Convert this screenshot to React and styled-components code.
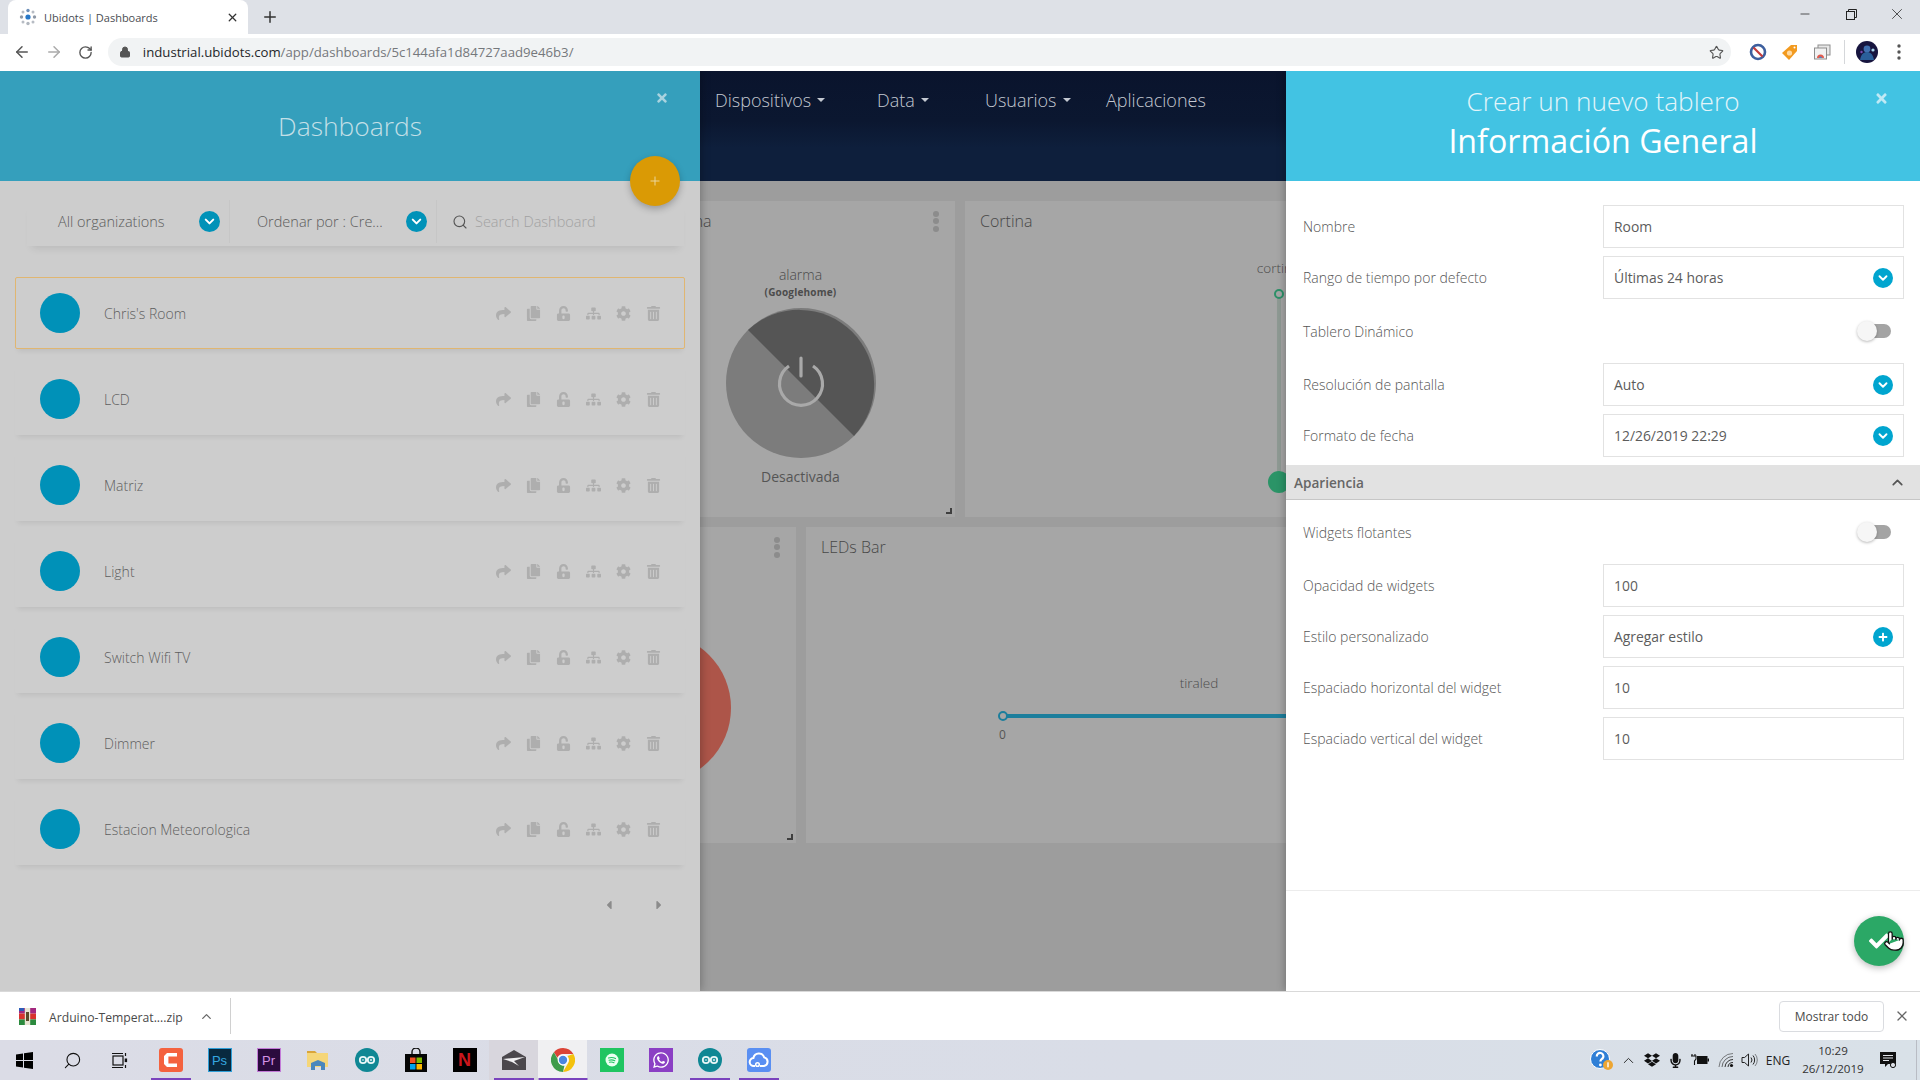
import React from 'react';
import styled, { createGlobalStyle } from 'styled-components';
import { ArrowLeft, ArrowRight, RotateCw, Lock, Star, X, Plus, Minus, Search, ChevronUp, ChevronDown, Pointer } from 'lucide-react';
import { FaShare, FaCopy, FaUnlockAlt, FaSitemap, FaCog, FaTrashAlt, FaCaretLeft, FaCaretRight, FaCheck, FaDropbox, FaMicrophone, FaWhatsapp, FaTimes, FaPlus } from 'react-icons/fa';

const Global = createGlobalStyle`
  html, body { margin: 0; padding: 0; height: 100%; overflow: hidden; background: #fff; }
  * { box-sizing: border-box; }
  body { font-family: "Open Sans", "Liberation Sans", sans-serif; }
`;

const Screen = styled.div`
  width: 1920px; height: 1080px; display: flex; flex-direction: column; overflow: hidden;
`;

/* ---------- browser chrome ---------- */
const TabStrip = styled.div`
  height: 34px; flex: none; background: #dee1e7; display: flex; align-items: stretch; padding-left: 8px;
`;
const Tab = styled.div`
  width: 240px; background: #fff; border-radius: 8px 8px 0 0; display: flex; align-items: center;
  padding: 0 9px 0 11px; color: #4a4d52; font-size: 11px;
`;
const TabTitle = styled.span`
  margin-left: 7px; flex: 1; white-space: nowrap;
`;
const NewTab = styled.div`
  width: 44px; display: flex; align-items: center; justify-content: center; color: #333;
`;
const WindowButtons = styled.div`
  margin-left: auto; display: flex; align-items: flex-start; color: #222;
`;
const WindowButton = styled.div`
  width: 46px; height: 28px; display: flex; align-items: center; justify-content: center;
`;
const Toolbar = styled.div`
  height: 37px; flex: none; background: #fff; display: flex; align-items: center; padding: 0 0 1px 6px;
`;
const NavIcon = styled.div`
  width: 32px; display: flex; justify-content: center; color: ${p => p.$dim ? '#aaa' : '#555'};
`;
const Omnibox = styled.div`
  width: 1626px; height: 28px; margin-left: 6px; border-radius: 14px; background: #f1f3f4; display: flex; align-items: center;
  padding: 0 7px 0 11px; font-size: 13.2px; color: #75787c;
`;
const Url = styled.span`
  margin-left: 12px; flex: 1; white-space: nowrap; b { font-weight: 400; color: #25272a; }
`;
const ToolIcons = styled.div`
  display: flex; align-items: center; margin-left: 11px;
`;
const ToolCell = styled.div`
  width: ${p => p.$w || 32}px; display: flex; justify-content: center; align-items: center;
`;
const ToolSep = styled.div`
  width: 1px; height: 24px; background: #d5d7da; margin: 0 11px 0 6px;
`;

/* ---------- page ---------- */
const Page = styled.div`
  flex: 1; min-height: 0; display: flex; overflow: hidden;
`;
const LeftPanel = styled.aside`
  width: 700px; flex: none; background: #cdcdcd; display: flex; flex-direction: column; position: relative; z-index: 2;
  box-shadow: 1px 0 9px rgba(0,0,0,.28);
`;
const LeftHeader = styled.header`
  height: 110px; flex: none; background: #359fbc; color: #c3dfe7; display: flex; align-items: center; justify-content: center; position: relative;
`;
const LeftTitle = styled.h1`
  margin: 0; font-size: 26.4px; font-weight: 300;
`;
const HeaderClose = styled.div`
  position: absolute; top: 20px; right: ${p => p.$right}px; color: ${p => p.$color}; display: flex;
`;
const Fab = styled.button`
  position: absolute; left: 630px; top: 85px; width: 50px; height: 50px; border-radius: 50%; border: 0; padding: 0;
  background: #da9a05; color: #ecd9a8; display: flex; align-items: center; justify-content: center;
  box-shadow: 0 3px 7px rgba(0,0,0,.25); z-index: 3;
`;
const FilterBar = styled.div`
  height: 46px; margin: 19px 16px 0 27px; flex: none; display: flex; align-items: stretch; box-shadow: 0 7px 8px -5px rgba(0,0,0,.1);
  font-size: 14.5px; color: #666; font-weight: 300; padding-bottom: 3px;
`;
const FilterCell = styled.div`
  width: ${p => p.$w}px; display: flex; align-items: center; padding: 0 ${p => p.$pr}px 0 ${p => p.$pl}px; border-right: 1px solid #c6c6c6; white-space: nowrap;
`;
const SearchCell = styled.div`
  flex: 1; display: flex; align-items: center; padding-left: 15px; color: #a2a2a2; gap: 7px; font-weight: 300;
`;
const FilterText = styled.span`
  flex: 1; color: #5c5c5c;
`;
const Round = styled.span`
  width: ${p => p.$size || 21}px; height: ${p => p.$size || 21}px; border-radius: 50%; flex: none; background: ${p => p.$bg}; color: ${p => p.$fg || '#fff'};
  display: inline-flex; align-items: center; justify-content: center;
`;
const RowList = styled.div`
  margin: 31px 15px 0; display: flex; flex-direction: column; gap: 14px;
`;
const Row = styled.div`
  height: 72px; display: flex; align-items: center; padding: 0 16px 0 24px; border-radius: 2px; color: #6c6c6c;
  border: 1px solid ${p => p.$active ? '#e0b671' : 'transparent'};
  box-shadow: 0 5px 5px -3px rgba(0,0,0,.08);
`;
const Avatar = styled.span`
  width: 40px; height: 40px; border-radius: 50%; background: #0091b8; flex: none;
`;
const RowName = styled.span`
  margin-left: 24px; flex: 1; font-size: 14px; font-weight: 300; color: #5e5e5e;
`;
const RowAction = styled.span`
  width: 30px; display: flex; justify-content: center; color: #aeaeae;
`;
const Pager = styled.div`
  margin-top: 33px; display: flex; justify-content: flex-end; gap: 36px; padding-right: 34px; color: #8b8b8b;
`;

const Center = styled.main`
  flex: 1; min-width: 0; background: #9d9d9d; display: flex; flex-direction: column; overflow: hidden;
`;
const NavBar = styled.nav`
  height: 110px; flex: none; background: linear-gradient(#0a142d 0%, #0b1730 45%, #0e1f3c 70%, #0e1f3c 100%);
  color: #c4c9d2; font-size: 18px; font-weight: 300; display: flex; padding: 17px 0 0 15px; align-items: flex-start;
`;
const NavItem = styled.span`
  width: ${p => p.$w}px; flex: none; display: flex; align-items: center; line-height: 24px; white-space: nowrap;
`;
const Caret = styled.i`
  width: 0; height: 0; margin-left: 6px; border: 4px solid transparent; border-top-color: #c4c9d2; border-bottom: 0;
`;
const Board = styled.div`
  padding-top: 20px; display: flex; flex-direction: column; gap: 10px;
`;
const BoardRow = styled.div`
  display: flex; gap: 10px; margin-left: ${p => p.$offset}px;
`;
const Card = styled.section`
  width: ${p => p.$w}px; height: 316px; flex: none; background: #a6a6a6; display: flex; flex-direction: column; position: relative; color: #4c4c4c;
`;
const CardHead = styled.div`
  height: 40px; flex: none; padding: 8px 16px 8px 15px; display: flex; justify-content: space-between; align-items: center; font-size: 16px; font-weight: 300; color: #484848;
`;
const Grip = styled.span`
  position: absolute; right: 3px; bottom: 3px; width: 6px; height: 6px; border-right: 2px solid #3f3f3f; border-bottom: 2px solid #3f3f3f;
`;
const Dots = styled.span`
  display: flex; flex-direction: column; gap: 1.5px; margin-left: auto; span { width: 6px; height: 6px; border-radius: 50%; background: #8c8c8c; }
`;
const CardBody = styled.div`
  flex: 1; display: flex; flex-direction: column; align-items: center; padding-top: ${p => p.$top || 0}px; font-weight: 300; position: relative;
`;
const AlarmName = styled.div`
  font-size: 14px; line-height: 20px; color: #4a4a4a;
`;
const AlarmSub = styled.div`
  font-size: 10px; line-height: 14px; font-weight: 700; color: #4c4c4c; margin-bottom: 9px; letter-spacing: .2px;
`;
const AlarmState = styled.div`
  font-size: 14px; line-height: 20px; margin-top: 9px; font-weight: 400; color: #555;
`;
const RedDisc = styled.div`
  width: 150px; height: 150px; border-radius: 50%; background: #ad5549; margin-top: 66px;
`;
const SliderLabel = styled.div`
  font-size: 13.5px; line-height: 20px; color: #4c4c4c;
`;
const VTrack = styled.div`
  width: 4px; height: 190px; margin-top: 14px; background: #8f9a94; position: relative; margin-left: 1px;
`;
const VKnob = styled.span`
  position: absolute; left: -3px; top: -3px; width: 10px; height: 10px; border-radius: 50%; border: 2.5px solid #2c9068; background: #a6a6a6;
`;
const VThumb = styled.span`
  position: absolute; left: -9px; top: 179px; width: 22px; height: 22px; border-radius: 50%; background: #2b9467;
`;
const HTrack = styled.div`
  width: 394px; height: 4px; margin-top: 21px; background: #1c7e9c; position: relative;
`;
const HKnob = styled.span`
  position: absolute; left: -4px; top: -3px; width: 10px; height: 10px; border-radius: 50%; border: 2.5px solid #1c7e9c; background: #a6a6a6;
`;
const HMin = styled.div`
  width: 394px; margin-top: 9px; font-size: 12px; line-height: 16px; color: #555; transform: translateX(-3px); font-weight: 400;
`;

/* ---------- right panel ---------- */
const RightPanel = styled.aside`
  width: 634px; flex: none; background: #fff; display: flex; flex-direction: column; position: relative; z-index: 2;
  box-shadow: -1px 0 8px rgba(0,0,0,.28);
`;
const RightHeader = styled.header`
  height: 110px; flex: none; background: #42c3e3; color: #fff; display: flex; flex-direction: column; align-items: center; position: relative; padding-top: 14px;
`;
const RightTitle = styled.div`
  font-size: 26.2px; line-height: 32px; font-weight: 300; color: #e3f5fa;
`;
const RightSub = styled.div`
  font-size: 32.2px; line-height: 42px; margin-top: 3px; font-weight: 400;
`;
const FormBody = styled.div`
  flex: 1; padding-top: 24px; display: flex; flex-direction: column; gap: 8px;
`;
const FormRow = styled.div`
  display: flex; align-items: center; justify-content: space-between; padding: 0 16px 0 17px; min-height: ${p => p.$h || 43}px;
`;
const Label = styled.label`
  font-size: 14px; font-weight: 300; color: #555;
`;
const Field = styled.div`
  width: 301px; height: 43px; border: 1px solid #e2e2e2; display: flex; align-items: center; justify-content: space-between; padding: 0 10px;
  font-size: 13.9px; color: #5c5c5c; font-weight: 400;
`;
const Toggle = styled.span`
  width: 36px; display: block; height: 20px; position: relative; margin-right: 11px;
  &::before { content: ''; position: absolute; left: 8px; top: 3px; width: 26px; height: 14px; border-radius: 7px; background: #a4a4a4; }
  &::after { content: ''; position: absolute; left: 0; top: 0; width: 20px; height: 20px; border-radius: 50%; background: #f6f6f6; box-shadow: 0 1px 3px rgba(0,0,0,.28); }
`;
const SectionBar = styled.div`
  height: 35px; flex: none; background: #e2e2e2; border-bottom: 1px solid #c6c6c6; display: flex; align-items: center; justify-content: space-between;
  padding: 0 14px 0 8px; font-size: 13.6px; font-weight: 600; color: #666;
`;
const FormFooter = styled.footer`
  height: 101px; flex: none; border-top: 1px solid #ececec; display: flex; align-items: center; justify-content: flex-end; padding: 0 16px 0 0;
`;
const SaveButton = styled.button`
  width: 50px; height: 50px; border: 0; padding: 0; border-radius: 50%; background: #2ba866; color: #fff; display: flex; align-items: center; justify-content: center; position: relative;
  box-shadow: 0 2px 7px rgba(0,0,0,.28);
`;
const Cursor = styled.span`
  position: absolute; left: 29px; top: 14px; display: flex; color: #111;
`;

/* ---------- download shelf ---------- */
const Shelf = styled.div`
  height: 49px; flex: none; background: #fff; border-top: 1px solid #d9d9d9; display: flex; align-items: center; font-size: 12.2px; color: #4a4a4a; padding: 0 0 0 19px;
`;
const ShelfName = styled.span`
  margin-left: 13px; width: 150px; white-space: nowrap; padding-top: 2px;
`;
const ShelfSep = styled.span`
  width: 1px; height: 36px; background: #d0d0d0; margin-left: 16px;
`;
const ShelfButton = styled.button`
  margin-left: auto; width: 105px; height: 31px; background: #fff; border: 1px solid #dadce0; border-radius: 4px; font: 400 12px "Open Sans", sans-serif; color: #4a4a4a; padding: 0;
`;
const ShelfClose = styled.span`
  width: 36px; display: flex; justify-content: center; color: #666;
`;

/* ---------- taskbar ---------- */
const Taskbar = styled.div`
  height: 40px; flex: none; background: linear-gradient(90deg, #dbdce6, #d9dde7 60%, #d9e1e8); display: flex; align-items: stretch;
`;
const Cell = styled.div`
  width: ${p => p.$w || 49}px; flex: none; display: flex; align-items: center; justify-content: center; position: relative;
  background: ${p => p.$active ? '#f0f0f2' : p.$open ? '#d8d6dd' : 'transparent'};
  &::after {
    content: ''; display: ${p => p.$line ? 'block' : 'none'}; position: absolute; bottom: 0; left: 50%; transform: translateX(-50%);
    width: ${p => p.$line}px; height: 2.5px; background: #7a43bd;
  }
`;
const Spacer = styled.div`
  width: 2px; flex: none;
`;
const AppTile = styled.span`
  width: 24px; height: 24px; display: flex; align-items: center; justify-content: center; background: ${p => p.$bg}; color: ${p => p.$fg};
  border: ${p => p.$bd ? `1.5px solid ${p.$bd}` : '0'}; font-size: ${p => p.$fs || 12}px; font-weight: ${p => p.$fw || 400}; border-radius: ${p => p.$r || 0}px; font-family: "Liberation Sans", sans-serif; line-height: 1;
`;
const Tray = styled.div`
  margin-left: auto; display: flex; align-items: center; color: #222; font-size: 12px;
`;
const TrayCell = styled.span`
  width: ${p => p.$w}px; flex: none; display: flex; justify-content: center; align-items: center;
`;
const Clock = styled.div`
  width: 74px; text-align: center; font-size: 11.6px; line-height: 18px; color: #333;
`;
const QuickEdge = styled.div`
  width: 4px; height: 100%; border-left: 1px solid #b9bcc4; margin-left: 10px;
`;

/* ---------- drawings ---------- */
const Favicon = () => (
  <svg width="18" height="18" viewBox="0 0 18 18">
    {[[9,2.5,'#6d8fb8',1.7],[4,4,'#b7bcc4',1.5],[14,4,'#b7bcc4',1.5],[2.5,9,'#8e98a6',1.7],[9,9,'#2878c8',2.6],[15.5,9,'#8e98a6',1.7],[4,14,'#b7bcc4',1.5],[9,15.5,'#b0b6be',1.7],[14,14,'#b7bcc4',1.5]].map(([x,y,c,r]) => <circle key={`${x}-${y}`} cx={x} cy={y} r={r} fill={c} />)}
  </svg>
);
const ExtBlock = () => (
  <svg width="18" height="18" viewBox="0 0 18 18"><circle cx="9" cy="9" r="7" fill="#fff" stroke="#3d5f9e" strokeWidth="2.6" /><path d="M4.5 4.5l9 9" stroke="#c43d3d" strokeWidth="2.2" /></svg>
);
const ExtTag = () => (
  <svg width="18" height="18" viewBox="0 0 18 18"><path d="M10 2h6v6l-8 9-7-7z" fill="#f29a1f" /><circle cx="8.5" cy="10" r="2.6" fill="#ffd9a0" /><circle cx="13.5" cy="4.5" r="1" fill="#fff" /></svg>
);
const ExtCast = () => (
  <svg width="18" height="18" viewBox="0 0 18 18"><rect x="5" y="2" width="12" height="10" fill="#e8e8e8" stroke="#8d8d8d" /><rect x="1.5" y="5" width="12" height="11" fill="#f2f2f2" stroke="#8d8d8d" /><path d="M4 15a3.5 3.5 0 017 0z" fill="#e35d4f" /><path d="M6 15a1.5 1.5 0 013 0z" fill="#4d86c8" /></svg>
);
const AvatarPic = () => (
  <svg width="22" height="22" viewBox="0 0 22 22"><circle cx="11" cy="11" r="11" fill="#17153f" /><circle cx="11" cy="8" r="3.4" fill="#3f6fb0" /><path d="M4 19c1-6 4-8 7-8s6 2 7 8z" fill="#2a5f9a" /><circle cx="17" cy="9" r="1.6" fill="#a8d6ee" /><circle cx="5.5" cy="11" r="1.2" fill="#7a4bb0" /></svg>
);
const MenuDots = () => (
  <svg width="4" height="16" viewBox="0 0 4 16"><circle cx="2" cy="2" r="1.7" fill="#555" /><circle cx="2" cy="8" r="1.7" fill="#555" /><circle cx="2" cy="14" r="1.7" fill="#555" /></svg>
);
const PowerDisc = () => (
  <svg width="150" height="150" viewBox="0 0 150 150">
    <circle cx="75" cy="75" r="75" fill="#7c7c7c" />
    <path d="M22 22A75 75 0 01128 128Z" fill="#555" />
    <path d="M63 58A21.5 21.5 0 1087 58" fill="none" stroke="#a9a9a9" strokeWidth="3.2" />
    <path d="M75 50v18" stroke="#a9a9a9" strokeWidth="3.2" strokeLinecap="round" />
  </svg>
);
const WinRar = () => (
  <svg width="17" height="17" viewBox="0 0 17 17">
    <rect x="0" y="0" width="17" height="5.6" fill="#a3277f" /><rect x="0" y="5.6" width="17" height="5.8" fill="#d8322e" /><rect x="0" y="11.4" width="17" height="5.6" fill="#2b8a3e" />
    <rect x="5.8" y="0" width="5.4" height="17" fill="#e8e4d2" /><rect x="7" y="4" width="3" height="9" fill="#5a4a2a" /><rect x="0" y="0" width="5" height="3" fill="#2c5cb8" />
  </svg>
);
const WindowsLogo = () => (
  <svg width="17" height="17" viewBox="0 0 17 17" fill="#000"><path d="M0 2.4l7-1V8H0zM8 1.2L17 0v8H8zM0 9h7v6.6l-7-1zM8 9h9v8l-9-1.2z" /></svg>
);
const TaskView = () => (
  <svg width="16" height="17" viewBox="0 0 16 17" fill="none" stroke="#111" strokeWidth="1.2"><path d="M0 1.5h11M0 15.5h11" /><rect x="1" y="4" width="10" height="9" /><path d="M13.5 1v3M13.5 13v3" /><rect x="12.7" y="6.5" width="2.4" height="3.6" fill="#111" stroke="none" /></svg>
);
const Camtasia = () => (
  <svg width="24" height="24" viewBox="0 0 24 24"><rect width="24" height="24" rx="3" fill="#f4623f" /><path d="M18 5H8L5 8v8l3 3h10v-3.6H9.4V8.6H18z" fill="#fff" /></svg>
);
const FolderIcon = () => (
  <svg width="22" height="22" viewBox="0 0 22 22"><path d="M0 2h8l2 2H0z" fill="#d9a53a" /><rect x="0" y="4" width="21" height="14" fill="#f5d679" /><path d="M4 14l7-3 7 3v7h-4v-4H8v4H4z" fill="#4a87bd" /></svg>
);
const ArduinoIcon = () => (
  <svg width="24" height="24" viewBox="0 0 24 24"><circle cx="12" cy="12" r="12" fill="#0f8794" /><g fill="none" stroke="#e8f6f7" strokeWidth="1.8"><circle cx="8" cy="12" r="3.2" /><circle cx="16" cy="12" r="3.2" /></g><path d="M6.8 12h2.4M14.8 12h2.4M16 10.8v2.4" stroke="#e8f6f7" strokeWidth="1" /></svg>
);
const StoreIcon = () => (
  <svg width="24" height="24" viewBox="0 0 24 24"><path d="M8 6V4a4 4 0 018 0v2" fill="none" stroke="#111" strokeWidth="1.4" /><rect x="1" y="6" width="22" height="18" fill="#050505" /><rect x="6" y="9.5" width="5.5" height="5.5" fill="#f25022" /><rect x="12.5" y="9.5" width="5.5" height="5.5" fill="#7fba00" /><rect x="6" y="16" width="5.5" height="5.5" fill="#00a4ef" /><rect x="12.5" y="16" width="5.5" height="5.5" fill="#ffb900" /></svg>
);
const MailIcon = () => (
  <svg width="24" height="20" viewBox="0 0 24 20"><path d="M0 7L12 0l12 7v13H0z" fill="#4b474c" /><path d="M1 9l22-2-11 4 5 5-7-4z" fill="#f1f0f2" /></svg>
);
const ChromeIcon = () => (
  <svg width="24" height="24" viewBox="0 0 24 24">
    <path d="M12 0a12 12 0 0110.4 6H12a6 6 0 00-5.6 3.8L2.9 4.2A12 12 0 0112 0z" fill="#db4437" />
    <path d="M22.4 6A12 12 0 0112 24l5.2-9A6 6 0 0016.4 8z" fill="#f4c20d" />
    <path d="M12 24A12 12 0 012.9 4.2L7.2 12a6 6 0 006.2 5.8z" fill="#3f9c4b" />
    <circle cx="12" cy="12" r="5.4" fill="#fff" /><circle cx="12" cy="12" r="4.2" fill="#4a86e0" />
  </svg>
);
const SpotifyIcon = () => (
  <svg width="24" height="24" viewBox="0 0 24 24"><rect width="24" height="24" fill="#1fc561" /><circle cx="12" cy="12" r="6.5" fill="#eafff1" /><path d="M8.5 10c2.5-.7 5-.5 7 .6M9 12.2c2-.5 4-.4 5.8.5M9.4 14.2c1.7-.3 3.2-.2 4.6.5" stroke="#1fc561" strokeWidth="1.1" fill="none" strokeLinecap="round" /></svg>
);
const CloudIcon = () => (
  <svg width="24" height="24" viewBox="0 0 24 24"><rect width="24" height="24" rx="3" fill="#5a8ff2" /><path d="M8 18H7a4 4 0 01-.6-8 5.6 5.6 0 0110.8-.6A4.4 4.4 0 0117 18h-4" fill="none" stroke="#fff" strokeWidth="2" /><circle cx="10.5" cy="16.5" r="1.8" fill="none" stroke="#fff" strokeWidth="1.5" /></svg>
);
const HelpIcon = () => (
  <svg width="24" height="22" viewBox="0 0 24 22"><circle cx="10" cy="10" r="9.5" fill="#2f7fd6" stroke="#fff" /><path d="M6.8 7.5a3.3 3.3 0 116 1.6c-1.2 1.2-2.4 1.5-2.4 3.4" fill="none" stroke="#fff" strokeWidth="2.2" /><circle cx="10.4" cy="16" r="1.4" fill="#fff" /><circle cx="18" cy="16" r="5" fill="#eda633" /><rect x="17.3" y="13.3" width="1.4" height="5" fill="#fff" /></svg>
);
const PlugBattery = () => (
  <svg width="18" height="14" viewBox="0 0 18 14"><path d="M1 3V1M4 3V1M0 3h5v3L3.5 8v4" fill="none" stroke="#111" strokeWidth="1.1" /><rect x="6" y="3" width="10.5" height="8" fill="#111" /><rect x="16.5" y="5.5" width="1.5" height="3" fill="#111" /></svg>
);
const WifiIcon = () => (
  <svg width="16" height="16" viewBox="0 0 16 16" fill="none" stroke="#333" strokeWidth="1"><path d="M1 15A14 14 0 0115 1.500" opacity=".6" /><path d="M4 15A11 11 0 0115 4.500" opacity=".7" /><path d="M7 15a8 8 0 018-7.500" /><path d="M10 15a5 5 0 015-4.500" /><circle cx="13.500" cy="13.500" r="1.600" fill="#111" stroke="none" /></svg>
);
const VolumeIcon = () => (
  <svg width="17" height="16" viewBox="0 0 17 16" fill="none" stroke="#222" strokeWidth="1"><path d="M1 5.500h2.600L7.500 2v12L3.600 10.500H1z" /><path d="M10 5.500a4 4 0 010 5M12 3.500a7 7 0 010 9" /><path d="M14 2a9 9 0 010 12" opacity=".5" /></svg>
);
const NotifyIcon = () => (
  <svg width="17" height="17" viewBox="0 0 17 17"><path d="M0 0h16v12H8l-3 3v-3H0z" fill="#111" /><path d="M3 3.500h10M3 6h10M3 8.500h6" stroke="#e0e3e8" strokeWidth="1" /><circle cx="13" cy="13" r="2.600" fill="#dde0e6" stroke="#111" strokeWidth="1" /></svg>
);

const boards = ["Chris's Room", 'LCD', 'Matriz', 'Light', 'Switch Wifi TV', 'Dimmer', 'Estacion Meteorologica'];
const rowIcons = [FaShare, FaCopy, FaUnlockAlt, FaSitemap, FaCog, FaTrashAlt];

const SelectDot = ({ plus }) => (
  <Round $bg="#00a5cf" $size={20}>
    {plus ? <FaPlus size={10} /> : <ChevronDown size={14} strokeWidth={3.2} />}
  </Round>
);

const VDots = () => <Dots><span /><span /><span /></Dots>;

export default function App() {
  return (
    <Screen>
      <Global />
      <TabStrip>
        <Tab>
          <Favicon />
          <TabTitle>Ubidots | Dashboards</TabTitle>
          <X size={13} color="#333" strokeWidth={2.4} />
        </Tab>
        <NewTab><Plus size={18} strokeWidth={2} /></NewTab>
        <WindowButtons>
          <WindowButton><Minus size={14} strokeWidth={1.3} /></WindowButton>
          <WindowButton>
            <svg width="11" height="11" viewBox="0 0 11 11" fill="none" stroke="#222" strokeWidth="1"><rect x=".5" y="2.500" width="8" height="8" /><path d="M2.500 2.500V.5h8v8H8.500" /></svg>
          </WindowButton>
          <WindowButton><X size={18} strokeWidth={1} /></WindowButton>
        </WindowButtons>
      </TabStrip>
      <Toolbar>
        <NavIcon><ArrowLeft size={18} strokeWidth={2} /></NavIcon>
        <NavIcon $dim><ArrowRight size={18} strokeWidth={2} /></NavIcon>
        <NavIcon><RotateCw size={15} strokeWidth={2.2} /></NavIcon>
        <Omnibox>
          <Lock size={12} color="#555" fill="#555" />
          <Url><b>industrial.ubidots.com</b>/app/dashboards/5c144afa1d84727aad9e46b3/</Url>
          <Star size={15} color="#555" strokeWidth={1.8} />
        </Omnibox>
        <ToolIcons>
          <ToolCell><ExtBlock /></ToolCell>
          <ToolCell><ExtTag /></ToolCell>
          <ToolCell><ExtCast /></ToolCell>
          <ToolSep />
          <ToolCell $w={22}><AvatarPic /></ToolCell>
          <ToolCell $w={42}><MenuDots /></ToolCell>
        </ToolIcons>
      </Toolbar>

      <Page>
        <LeftPanel>
          <LeftHeader>
            <LeftTitle>Dashboards</LeftTitle>
            <HeaderClose $right={31} $color="#a9d3df"><FaTimes size={14} /></HeaderClose>
          </LeftHeader>
          <Fab aria-label="add"><Plus size={14} strokeWidth={1.6} /></Fab>
          <FilterBar>
            <FilterCell $w={203} $pl={31} $pr={9}>
              <FilterText>All organizations</FilterText>
              <Round $bg="#0092b8"><ChevronDown size={15} strokeWidth={3.2} /></Round>
            </FilterCell>
            <FilterCell $w={207} $pl={27} $pr={9}>
              <FilterText>Ordenar por : Cre...</FilterText>
              <Round $bg="#0092b8"><ChevronDown size={15} strokeWidth={3.2} /></Round>
            </FilterCell>
            <SearchCell>
              <Search size={16} color="#555" strokeWidth={1.7} />
              <span>Search Dashboard</span>
            </SearchCell>
          </FilterBar>
          <RowList>
            {boards.map((name, i) => (
              <Row key={name} $active={i === 0}>
                <Avatar />
                <RowName>{name}</RowName>
                {rowIcons.map((Icon, k) => <RowAction key={k}><Icon size={15} /></RowAction>)}
              </Row>
            ))}
          </RowList>
          <Pager><FaCaretLeft size={14} /><FaCaretRight size={14} /></Pager>
        </LeftPanel>

        <Center>
          <NavBar>
            <NavItem $w={162}>Dispositivos<Caret /></NavItem>
            <NavItem $w={108}>Data<Caret /></NavItem>
            <NavItem $w={121}>Usuarios<Caret /></NavItem>
            <NavItem $w={110}>Aplicaciones</NavItem>
          </NavBar>
          <Board>
            <BoardRow $offset={-54}>
              <Card $w={309}>
                <CardHead>Alarma<VDots /></CardHead>
                <CardBody $top={24}>
                  <AlarmName>alarma</AlarmName>
                  <AlarmSub>(Googlehome)</AlarmSub>
                  <PowerDisc />
                  <AlarmState>Desactivada</AlarmState>
                </CardBody>
                <Grip />
              </Card>
              <Card $w={626}>
                <CardHead>Cortina</CardHead>
                <CardBody $top={17}>
                  <SliderLabel>cortina</SliderLabel>
                  <VTrack><VKnob /><VThumb /></VTrack>
                </CardBody>
              </Card>
            </BoardRow>
            <BoardRow $offset={-184}>
              <Card $w={280}>
                <CardHead><VDots /></CardHead>
                <CardBody><RedDisc /></CardBody>
                <Grip />
              </Card>
              <Card $w={786}>
                <CardHead>LEDs Bar</CardHead>
                <CardBody $top={106}>
                  <SliderLabel>tiraled</SliderLabel>
                  <HTrack><HKnob /></HTrack>
                  <HMin>0</HMin>
                </CardBody>
              </Card>
            </BoardRow>
          </Board>
        </Center>

        <RightPanel>
          <RightHeader>
            <RightTitle>Crear un nuevo tablero</RightTitle>
            <RightSub>Información General</RightSub>
            <HeaderClose $right={31} $color="#bfe9f5"><FaTimes size={15} /></HeaderClose>
          </RightHeader>
          <FormBody>
            <FormRow><Label>Nombre</Label><Field>Room</Field></FormRow>
            <FormRow><Label>Rango de tiempo por defecto</Label><Field>Últimas 24 horas<SelectDot /></Field></FormRow>
            <FormRow $h={48}><Label>Tablero Dinámico</Label><Toggle /></FormRow>
            <FormRow><Label>Resolución de pantalla</Label><Field>Auto<SelectDot /></Field></FormRow>
            <FormRow><Label>Formato de fecha</Label><Field>12/26/2019 22:29<SelectDot /></Field></FormRow>
            <SectionBar>Apariencia<ChevronUp size={17} color="#555" strokeWidth={2.4} /></SectionBar>
            <FormRow $h={48}><Label>Widgets flotantes</Label><Toggle /></FormRow>
            <FormRow><Label>Opacidad de widgets</Label><Field>100</Field></FormRow>
            <FormRow><Label>Estilo personalizado</Label><Field>Agregar estilo<SelectDot plus /></Field></FormRow>
            <FormRow><Label>Espaciado horizontal del widget</Label><Field>10</Field></FormRow>
            <FormRow><Label>Espaciado vertical del widget</Label><Field>10</Field></FormRow>
          </FormBody>
          <FormFooter>
            <SaveButton aria-label="save">
              <FaCheck size={20} />
              <Cursor><Pointer size={22} fill="#fff" strokeWidth={1.4} /></Cursor>
            </SaveButton>
          </FormFooter>
        </RightPanel>
      </Page>

      <Shelf>
        <WinRar />
        <ShelfName>Arduino-Temperat....zip</ShelfName>
        <ChevronUp size={15} color="#666" strokeWidth={2} />
        <ShelfSep />
        <ShelfButton>Mostrar todo</ShelfButton>
        <ShelfClose><X size={16} strokeWidth={2} /></ShelfClose>
      </Shelf>

      <Taskbar>
        <Cell $w={48}><WindowsLogo /></Cell>
        <Cell $w={48}><Search size={19} strokeWidth={1.4} color="#111" transform="scale(-1 1)" /></Cell>
        <Cell $w={48}><TaskView /></Cell>
        <Spacer />
        <Cell $line={40}><Camtasia /></Cell>
        <Cell><AppTile $bg="#08293f" $fg="#35a8e0" $bd="#2f9fd8" $fs={13}>Ps</AppTile></Cell>
        <Cell><AppTile $bg="#2b0b3e" $fg="#d493e6" $bd="#c37bd8" $fs={13}>Pr</AppTile></Cell>
        <Cell><FolderIcon /></Cell>
        <Cell><ArduinoIcon /></Cell>
        <Cell><StoreIcon /></Cell>
        <Cell><AppTile $bg="#000" $fg="#c9161c" $fs={18} $fw={700}>N</AppTile></Cell>
        <Cell $open $line={40}><MailIcon /></Cell>
        <Cell $active $line={49}><ChromeIcon /></Cell>
        <Cell><SpotifyIcon /></Cell>
        <Cell><AppTile $bg="#8b3fc4" $fg="#fff" $fs={18}><FaWhatsapp /></AppTile></Cell>
        <Cell $line={40}><ArduinoIcon /></Cell>
        <Cell $line={40}><CloudIcon /></Cell>
        <Tray>
          <TrayCell $w={28}><HelpIcon /></TrayCell>
          <TrayCell $w={24}><ChevronUp size={17} strokeWidth={1.3} /></TrayCell>
          <TrayCell $w={24}><FaDropbox size={16} color="#111" /></TrayCell>
          <TrayCell $w={22}><FaMicrophone size={15} color="#111" /></TrayCell>
          <TrayCell $w={28}><PlugBattery /></TrayCell>
          <TrayCell $w={24}><WifiIcon /></TrayCell>
          <TrayCell $w={22}><VolumeIcon /></TrayCell>
          <TrayCell $w={36}>ENG</TrayCell>
          <Clock>10:29<br />26/12/2019</Clock>
          <TrayCell $w={36}><NotifyIcon /></TrayCell>
          <QuickEdge />
        </Tray>
      </Taskbar>
    </Screen>
  );
}
